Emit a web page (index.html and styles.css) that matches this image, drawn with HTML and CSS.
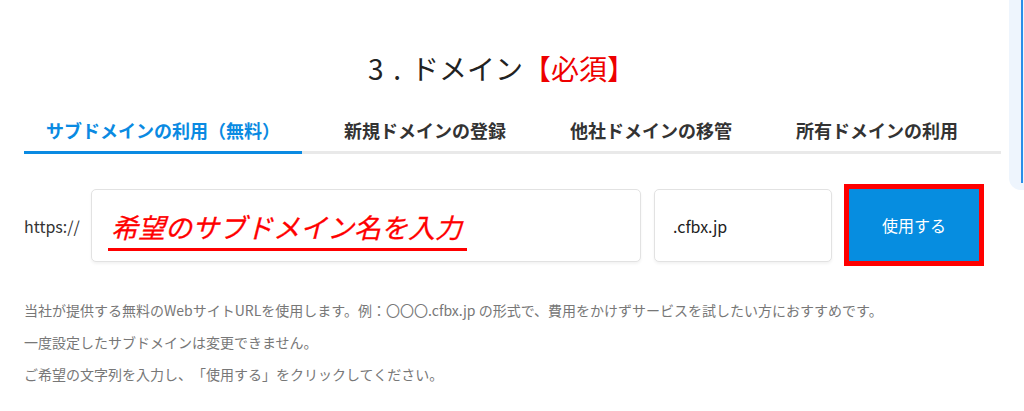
FILE: index.html
```html
<!DOCTYPE html>
<html lang="ja">
<head>
<meta charset="utf-8">
<link rel="stylesheet" href="styles.css">
</head>
<body>
<div class="page">
  <h2 class="title"><span class="num">3.</span>ドメイン<span class="req">【必須】</span></h2>
  <div class="tabs">
    <div class="tab active">サブドメインの利用（無料）</div>
    <div class="tab">新規ドメインの登録</div>
    <div class="tab">他社ドメインの移管</div>
    <div class="tab">所有ドメインの利用</div>
  </div>
  <div class="row">
    <span class="scheme">https://</span>
    <div class="field main"><span class="hint">希望のサブドメイン名を入力</span></div>
    <div class="field suffix">.cfbx.jp</div>
    <button class="btn">使用する</button>
  </div>
  <div class="help">
    <p>当社が提供する無料のWebサイトURLを使用します。例：〇〇〇.cfbx.jp の形式で、費用をかけずサービスを試したい方におすすめです。</p>
    <p>一度設定したサブドメインは変更できません。</p>
    <p>ご希望の文字列を入力し、「使用する」をクリックしてください。</p>
  </div>
</div>
<div class="edge"><div class="edge-line"></div></div>
</body>
</html>
```
FILE: styles.css
```css
html, body {
  margin: 0;
  padding: 0;
  background: #ffffff;
}
body {
  font-family: "Noto Sans CJK JP", "Noto Sans", sans-serif;
  color: #222;
  width: 1024px;
  height: 411px;
  overflow: hidden;
  position: relative;
  text-spacing-trim: space-all;
}
.page {
  width: 977px;
  padding: 46px 23px 0 24px;
}
.title {
  margin: 0;
  text-align: center;
  font-size: 28px;
  font-weight: 400;
  line-height: 44px;
  color: #222;
  padding-right: 22px;
}
.title .num {
  letter-spacing: 0.35em;
}
.title .req {
  color: #ee0000;
}
.tabs {
  margin-top: 28px;
  display: flex;
  gap: 20px;
  border-bottom: 3px solid #e9e9e9;
}
.tab {
  padding: 0 22px 9px;
  font-size: 18px;
  font-weight: 700;
  line-height: 24px;
  color: #333;
  margin-bottom: -3px;
  border-bottom: 3px solid transparent;
}
.tab.active {
  color: #0a8ae2;
  border-bottom-color: #0a8ae2;
}
.row {
  margin-top: 35px;
  display: flex;
  align-items: center;
}
.scheme {
  font-size: 16px;
  color: #333;
  width: 67px;
}
.field {
  box-sizing: border-box;
  height: 73px;
  border: 1px solid #e2e2e2;
  border-radius: 5px;
  box-shadow: 0 2px 3px rgba(0, 0, 0, 0.05);
  display: flex;
  align-items: center;
  background: #fff;
}
.field.main {
  width: 550px;
  padding-left: 16px;
}
.hint {
  display: inline-block;
  color: #ff0000;
  font-size: 27px;
  font-weight: 400;
  font-style: italic;
  line-height: 32px;
  padding: 0 5px 5px 3px;
  border-bottom: 3px solid #ff0000;
  margin-top: 10px;
  -webkit-text-stroke: 0.3px #ff0000;
}
.field.suffix {
  width: 178px;
  margin-left: 13px;
  padding-left: 18px;
  font-size: 16px;
  color: #222;
}
.btn {
  margin-left: 17px;
  width: 130px;
  height: 72px;
  background: #068de0;
  color: #fff;
  border: none;
  outline: 5px solid #ff0000;
  font-family: inherit;
  font-size: 16px;
  padding: 0;
  margin-top: -2px;
}
.help {
  margin-top: 32px;
  font-size: 14px;
  line-height: 32px;
  color: #777;
}
.help p {
  margin: 0;
}
.edge {
  position: absolute;
  left: 1009px;
  top: 0;
  width: 15px;
  height: 190px;
  background: #eef5fd;
  border-bottom-left-radius: 12px;
}
.edge-line {
  position: absolute;
  left: 12px;
  top: 0;
  width: 2px;
  height: 183px;
  background: #2a8ee8;
}
```
